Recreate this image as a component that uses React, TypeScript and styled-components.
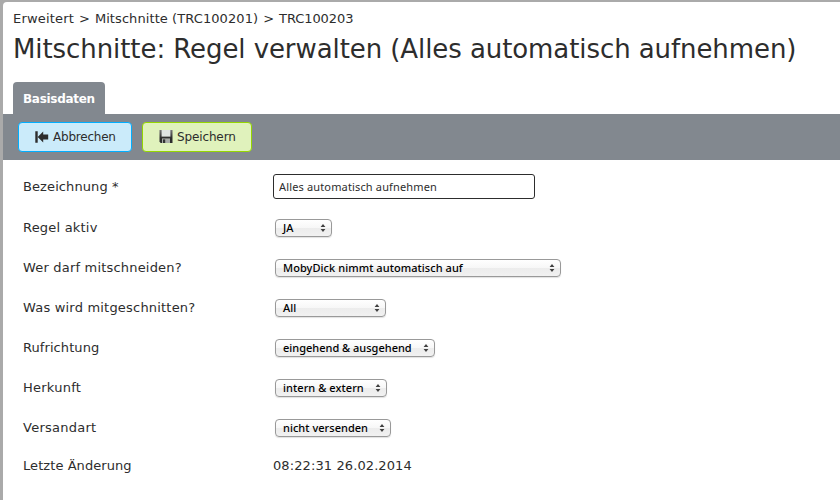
import React from "react";
import styled, { createGlobalStyle } from "styled-components";

const GlobalStyle = createGlobalStyle`
  * { box-sizing: border-box; }
  body { margin: 0; background: #aaa; overflow: hidden; }
`;

const Page = styled.main`
  height: 500px;
  padding: 2px 0 0 3px;
  background: #aaa;
  font-family: "DejaVu Sans", Verdana, sans-serif;
  color: #2d2d2d;
`;

const Panel = styled.div`
  height: 498px;
  background: #fff;
  border-top-left-radius: 4px;
  display: flex;
  flex-direction: column;
`;

const Header = styled.header`
  height: 80px;
  padding: 8px 10px 0;
  white-space: nowrap;
`;

const Breadcrumb = styled.nav`
  font-size: 13px;
  line-height: 18px;
  display: flex;
  gap: 5px;
`;

const Crumb = styled.span<{ $ls?: number }>`
  letter-spacing: ${(p) => p.$ls ?? 0}px;
`;

const Title = styled.h1`
  margin: 2px 0 0;
  font-size: 26px;
  line-height: 38px;
  font-weight: 400;
  letter-spacing: -0.08px;
`;

const Tabs = styled.div`
  display: flex;
  padding-left: 10px;
`;

const Tab = styled.div`
  width: 92px;
  height: 32px;
  padding-left: 10px;
  border-radius: 4px 4px 0 0;
  background: #82888f;
  color: #fff;
  font-size: 12px;
  line-height: 34px;
  font-weight: 700;
  letter-spacing: -0.3px;
  white-space: nowrap;
`;

const Toolbar = styled.div`
  height: 46px;
  flex: none;
  display: flex;
  gap: 10px;
  padding: 8px 15px;
  background: #82888f;
`;

const Button = styled.button<{ $tone: "blue" | "green"; $w: number; $ls: number }>`
  width: ${(p) => p.$w}px;
  height: 30px;
  padding: 0 0 1px 16px;
  display: flex;
  align-items: center;
  gap: 4px;
  border: 1px solid ${(p) => (p.$tone === "blue" ? "#00aeff" : "#95d600")};
  border-radius: 4px;
  background: ${(p) => (p.$tone === "blue" ? "#cbebfa" : "#e0f2bc")};
  color: #2d2d2d;
  font: 12px "DejaVu Sans", Verdana, sans-serif;
  letter-spacing: ${(p) => p.$ls}px;
  white-space: nowrap;

  svg { flex: none; }
`;

const Form = styled.form`
  padding: 6px 0 0 20px;
`;

const Row = styled.div<{ $h?: number }>`
  height: ${(p) => p.$h ?? 40}px;
  display: grid;
  grid-template-columns: 250px auto;
  align-items: center;
  justify-items: start;
`;

const Label = styled.label<{ $ls?: number }>`
  font-size: 13px;
  line-height: 16px;
  letter-spacing: ${(p) => p.$ls ?? 0}px;
  white-space: nowrap;
`;

const Input = styled.input`
  width: 262px;
  height: 25px;
  margin-bottom: 2px;
  padding: 1px 5px 0;
  border: 1px solid #2d2d2d;
  border-radius: 3px;
  background: #fff;
  color: #2d2d2d;
  font: 11px "Noto Sans", sans-serif;
  letter-spacing: 0.15px;
  outline: none;
`;

const Select = styled.div<{ $w: number; $ls: number }>`
  width: ${(p) => p.$w}px;
  height: 18px;
  margin-left: 2px;
  padding: 0 5px 0 7px;
  display: flex;
  align-items: center;
  justify-content: space-between;
  border: 1px solid #999;
  border-radius: 4px;
  background: linear-gradient(#fff, #f7f7f7 50%, #ececec 51%, #f1f1f1);
  box-shadow: 0 1px 1px rgba(0, 0, 0, 0.12);
  color: #000;
  font: 500 11px/16px "Noto Sans", sans-serif;
  letter-spacing: ${(p) => p.$ls}px;
  white-space: nowrap;
`;

const Arrows = () => (
  <svg width="6" height="8" viewBox="0 0 6 8" fill="#404040">
    <path d="M3 0 5.4 3H.6ZM3 8 .6 5h4.8Z" />
  </svg>
);

const BackIcon = () => (
  <svg width="14" height="12" viewBox="0 0 14 12" fill="#2d2d2d">
    <path d="M.3.3h2.4v11.4H.3ZM2.7 6 8.2.6V3.6h5v4.8h-5v3Z" />
  </svg>
);

const DiskIcon = () => (
  <svg width="14" height="13" viewBox="0 0 14 13">
    <defs>
      <linearGradient id="disk" x1="0" y1="0" x2="0" y2="1">
        <stop offset="0" stopColor="#777" />
        <stop offset=".6" stopColor="#2d2d2d" />
      </linearGradient>
    </defs>
    <path d="M.5 0h13v13H1.7L.5 11.8Z" fill="url(#disk)" />
    <path d="M2.6 0h8.8v6.6H2.6Z" fill="#dfe3e2" />
    <path d="M3 8.4h8V13H3Z" fill="#a9aca9" />
    <path d="M4 9.4h2.2V13H4Z" fill="#333" />
  </svg>
);

const choices = [
  { label: "Regel aktiv", value: "JA", w: 57, ls: 0, lls: 0.2 },
  { label: "Wer darf mitschneiden?", value: "MobyDick nimmt automatisch auf", w: 286, ls: 0.06, lls: 0.19 },
  { label: "Was wird mitgeschnitten?", value: "All", w: 111, ls: 0.1, lls: 0.2 },
  { label: "Rufrichtung", value: "eingehend & ausgehend", w: 160, ls: 0, lls: 0.08 },
  { label: "Herkunft", value: "intern & extern", w: 112, ls: 0.06, lls: 0.25 },
  { label: "Versandart", value: "nicht versenden", w: 116, ls: 0.03, lls: 0.25 },
];

export default function App() {
  return (
    <Page>
      <GlobalStyle />
      <Panel>
        <Header>
          <Breadcrumb>
            <Crumb $ls={0.18}>Erweitert</Crumb>
            <Crumb>&gt;</Crumb>
            <Crumb $ls={0.08}>Mitschnitte (TRC100201)</Crumb>
            <Crumb>&gt;</Crumb>
            <Crumb $ls={-0.08}>TRC100203</Crumb>
          </Breadcrumb>
          <Title>Mitschnitte: Regel verwalten (Alles automatisch aufnehmen)</Title>
        </Header>
        <Tabs>
          <Tab>Basisdaten</Tab>
        </Tabs>
        <Toolbar>
          <Button type="button" $tone="blue" $w={114} $ls={-0.22}>
            <BackIcon />
            Abbrechen
          </Button>
          <Button type="button" $tone="green" $w={110} $ls={-0.13}>
            <DiskIcon />
            Speichern
          </Button>
        </Toolbar>
        <Form>
          <Row $h={42}>
            <Label htmlFor="name" $ls={0.1}>Bezeichnung *</Label>
            <Input id="name" defaultValue="Alles automatisch aufnehmen" />
          </Row>
          {choices.map((c) => (
            <Row key={c.label}>
              <Label $ls={c.lls}>{c.label}</Label>
              <Select $w={c.w} $ls={c.ls}>
                {c.value}
                <Arrows />
              </Select>
            </Row>
          ))}
          <Row $h={36}>
            <Label $ls={0.07}>Letzte Änderung</Label>
            <Label as="span" $ls={0.1}>08:22:31 26.02.2014</Label>
          </Row>
        </Form>
      </Panel>
    </Page>
  );
}
